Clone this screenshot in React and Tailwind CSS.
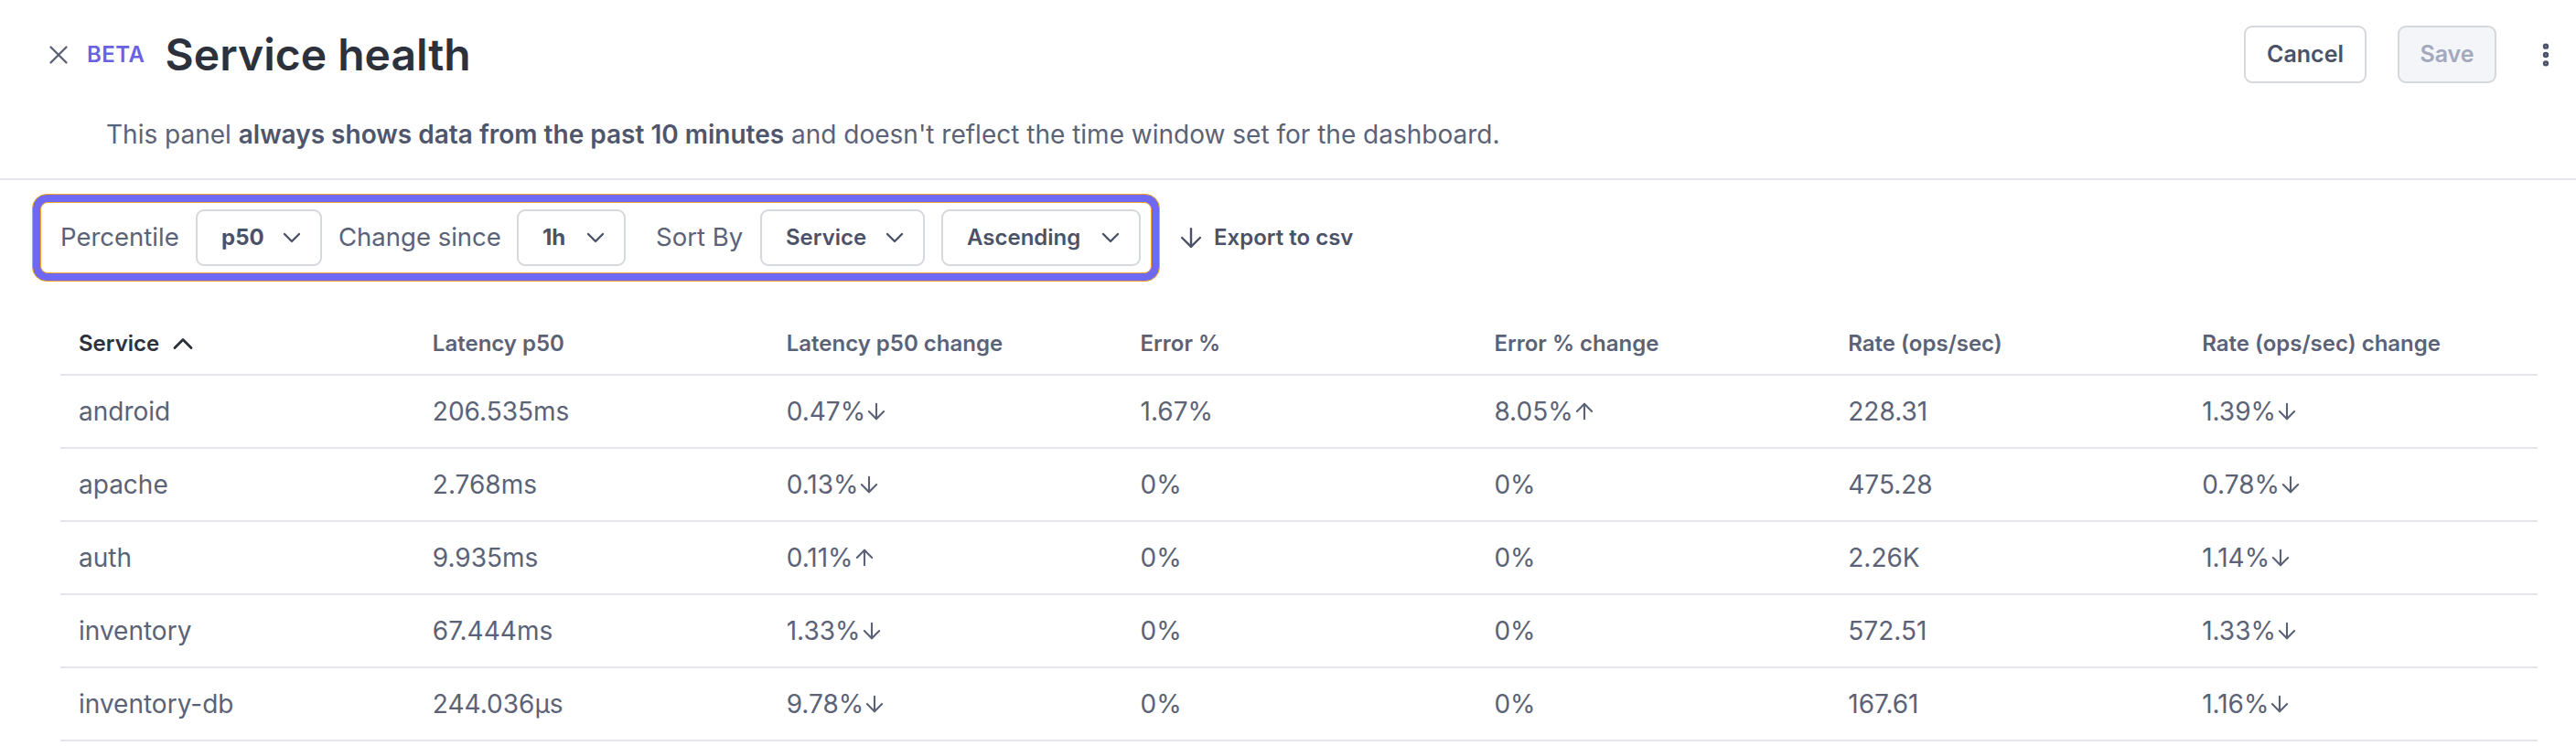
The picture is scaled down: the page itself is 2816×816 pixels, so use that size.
import React from 'react';
import { X, ChevronDown, ChevronUp, ArrowDown, ArrowUp, EllipsisVertical } from 'lucide-react';

const rows = [
  ['android', '206.535ms', ['0.47%', 'down'], '1.67%', ['8.05%', 'up'], '228.31', ['1.39%', 'down']],
  ['apache', '2.768ms', ['0.13%', 'down'], '0%', '0%', '475.28', ['0.78%', 'down']],
  ['auth', '9.935ms', ['0.11%', 'up'], '0%', '0%', '2.26K', ['1.14%', 'down']],
  ['inventory', '67.444ms', ['1.33%', 'down'], '0%', '0%', '572.51', ['1.33%', 'down']],
  ['inventory-db', '244.036µs', ['9.78%', 'down'], '0%', '0%', '167.61', ['1.16%', 'down']],
];

const headers = ['Latency p50', 'Latency p50 change', 'Error %', 'Error % change', 'Rate (ops/sec)', 'Rate (ops/sec) change'];

const Select = ({ value, bold, width }) => (
  <div className={`flex items-center justify-between h-[62px] pl-[26px] pr-[15px] border-2 border-[#d6d8df] rounded-[9px] bg-white ${width}`}>
    <span className={`text-[24px] text-[#4b5267] ${bold ? 'font-bold' : 'font-semibold'}`}>{value}</span>
    <ChevronDown size={32} strokeWidth={1.8} className="text-[#4b5267]" />
  </div>
);

const Cell = ({ value }) => {
  if (Array.isArray(value)) {
    const Icon = value[1] === 'up' ? ArrowUp : ArrowDown;
    return (
      <div className="flex items-center">
        <span>{value[0]}</span>
        <Icon size={28} strokeWidth={1.8} className="-ml-[2px] text-[#5b6276]" />
      </div>
    );
  }
  return <span>{value}</span>;
};

export default function App() {
  return (
    <div className="min-h-screen bg-white font-['Inter',sans-serif] text-[#5b6276] overflow-hidden">
      {/* header */}
      <div className="flex items-center justify-between pt-[28px] pl-[47px] pr-[17px]">
        <div className="flex items-center">
          <X size={34} strokeWidth={1.7} className="text-[#5b6276]" />
          <span className="ml-[14px] text-[24px] font-semibold tracking-[0.5px] text-[#6a62e2]">BETA</span>
          <h1 className="ml-[22px] text-[48px] leading-[60px] font-semibold text-[#2c313c]">Service health</h1>
        </div>
        <div className="flex items-center">
          <button className="h-[63px] w-[134px] rounded-[9px] border-2 border-[#d6d8df] bg-white text-[25px] font-semibold text-[#4b5267]">
            Cancel
          </button>
          <button className="ml-[34px] h-[63px] w-[108px] rounded-[9px] border-2 border-[#d6d8df] bg-[#f4f5f8] text-[25px] font-semibold text-[#a3a9bc]">
            Save
          </button>
          <EllipsisVertical size={32} strokeWidth={2.8} className="ml-[38px] text-[#4b5267]" />
        </div>
      </div>

      <p className="mt-[36px] ml-[116px] text-[28px] leading-[40px]">
        This panel <span className="font-semibold text-[#4f566b]">always shows data from the past 10 minutes</span> and doesn't reflect the time window set for the dashboard.
      </p>

      <div className="mt-[28px] h-[2px] bg-[#e6e7ec]" />

      {/* toolbar */}
      <div className="mt-[15px] ml-[35px] flex items-center">
        <div className="rounded-[16px] border border-[#f5a524] bg-[#6e68f3] p-[8px]">
          <div className="flex items-center h-[78px] rounded-[8px] border border-[#f5a524] bg-white pl-[21px] pr-[11px] text-[27.5px]">
            <span className="w-[148px]">Percentile</span>
            <Select value="p50" bold width="w-[138px]" />
            <span className="ml-[18px] w-[195px]">Change since</span>
            <Select value="1h" bold width="w-[119px]" />
            <span className="ml-[33px] w-[114px]">Sort By</span>
            <Select value="Service" width="w-[180px]" />
            <div className="ml-[18px]"><Select value="Ascending" width="w-[218px]" /></div>
          </div>
        </div>
        <div className="ml-[17px] flex items-center gap-[8px] text-[24px] font-semibold text-[#4b5267]">
          <ArrowDown size={34} strokeWidth={1.7} />
          <span>Export to csv</span>
        </div>
      </div>

      {/* table */}
      <div className="mt-[23px] ml-[66px] mr-[42px]">
        <div className="grid grid-cols-7 items-start h-[80px] border-b-2 border-[#e6e7ec] pt-[29px] text-[24px] font-semibold leading-[32px]">
          <div className="pl-[20px] flex items-center h-[32px] gap-[8px] text-[#2c313c]">
            <span>Service</span>
            <ChevronUp size={36} strokeWidth={1.9} />
          </div>
          {headers.map((h) => (
            <div key={h} className="pl-[20px]">{h}</div>
          ))}
        </div>
        {rows.map((r) => (
          <div key={r[0]} className="grid grid-cols-7 items-center h-[80px] border-b-2 border-[#e6e7ec] text-[28px]">
            {r.map((v, i) => (
              <div key={i} className="pl-[20px]">
                <Cell value={v} />
              </div>
            ))}
          </div>
        ))}
      </div>
    </div>
  );
}
